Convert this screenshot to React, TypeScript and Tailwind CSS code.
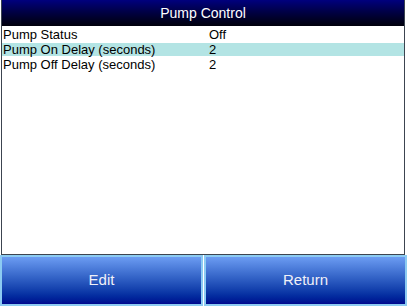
const rows = [
  { label: "Pump Status", value: "Off", selected: false },
  { label: "Pump On Delay (seconds)", value: "2", selected: true },
  { label: "Pump Off Delay (seconds)", value: "2", selected: false },
];

// HMI pump screen: navy title bar, settings list, two soft-key buttons
export default function App() {
  return (
    <div className="w-[407px] h-[306px] bg-white flex flex-col font-['Liberation_Sans',Arial,sans-serif] overflow-hidden">
      <div className="ml-[1px] w-[404px] h-[255px] flex flex-col border-x border-b border-[#3c4450]">
        {/* Title bar */}
        <div className="h-[26px] shrink-0 flex items-center justify-center bg-gradient-to-b from-[#00007e] to-[#00000c] text-white text-[14px]">
          Pump Control
        </div>

        {/* Setting rows */}
        <div className="flex-1 flex flex-col pt-[1px]">
          {rows.map((row) => (
            <div key={row.label} className="h-[15px] py-[1px] flex">
              <div
                className={`flex-1 flex items-center text-[13px] leading-none text-black ${
                  row.selected ? "bg-[#b3e4e4]" : ""
                }`}
              >
                <span className="w-[207px] pl-[1px]">{row.label}</span>
                <span>{row.value}</span>
              </div>
            </div>
          ))}
        </div>
      </div>

      {/* Soft keys */}
      <div className="flex-1 flex gap-[1px]">
        {["Edit", "Return"].map((label) => (
          <button
            key={label}
            className="flex-1 flex items-center justify-center border-2 border-[#8ccbf2] bg-gradient-to-b from-[#6c9cf2] to-[#00068e] text-[#f0f0f8] text-[15px]"
          >
            {label}
          </button>
        ))}
      </div>
    </div>
  );
}
